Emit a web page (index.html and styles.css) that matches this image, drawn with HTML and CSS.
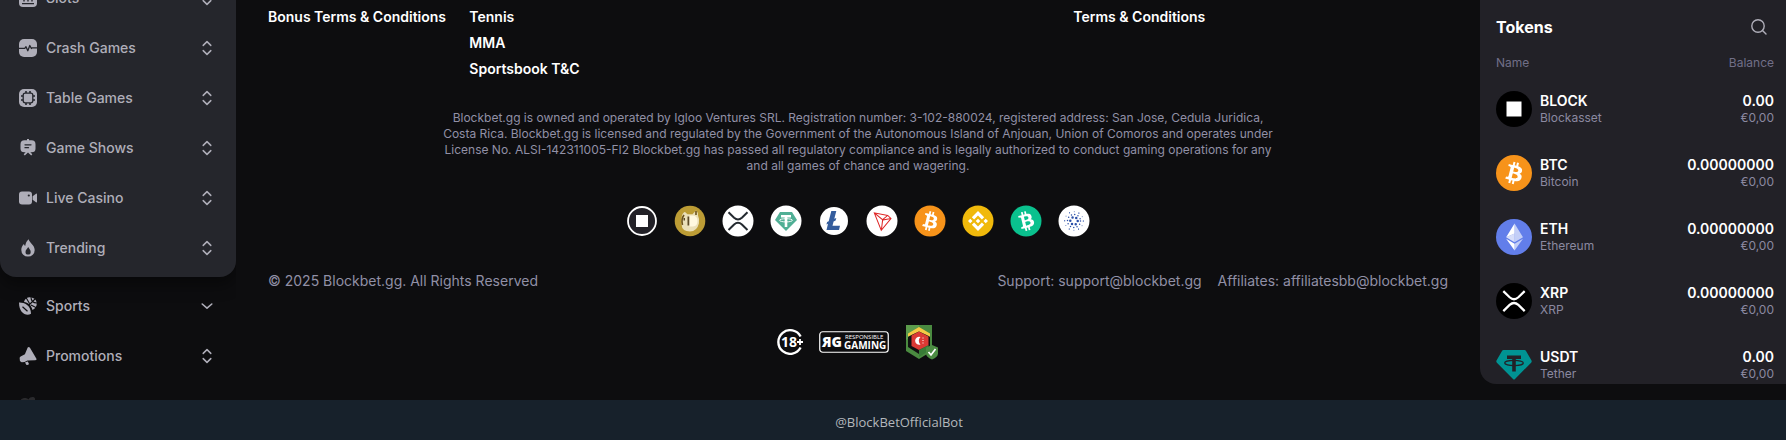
FILE: index.html
```html
<!DOCTYPE html>
<html lang="en">
<head>
<meta charset="utf-8">
<title>Blockbet.gg</title>
<link rel="stylesheet" href="styles.css">
</head>
<body>
<svg class="sprite" aria-hidden="true">
  <symbol id="updown" viewBox="0 0 14 18"><path d="M3.2 6.4 7 2.6l3.8 3.8M3.2 11.6 7 15.4l3.8-3.8" fill="none" stroke="currentColor" stroke-width="1.5" stroke-linecap="round" stroke-linejoin="round"/></symbol>
  <symbol id="btc" viewBox="0 0 32 32"><path fill="#fff" d="M23.189 14.02c.314-2.096-1.283-3.223-3.465-3.975l.708-2.84-1.728-.43-.69 2.765c-.454-.114-.92-.22-1.385-.326l.695-2.783L15.596 6l-.708 2.839c-.376-.086-.746-.17-1.104-.26l.002-.009-2.384-.595-.46 1.846s1.283.294 1.256.312c.7.175.826.638.805 1.006l-.806 3.235c.048.012.11.03.18.057l-.183-.045-1.13 4.532c-.086.212-.303.531-.793.41.018.025-1.256-.313-1.256-.313l-.858 1.978 2.25.561c.418.105.828.215 1.231.318l-.715 2.872 1.727.43.708-2.84c.472.127.93.245 1.378.357l-.706 2.828 1.728.43.715-2.866c2.948.558 5.164.333 6.097-2.333.752-2.146-.037-3.385-1.588-4.192 1.13-.26 1.98-1.003 2.207-2.538zm-3.95 5.538c-.533 2.147-4.148.986-5.32.695l.95-3.805c1.172.293 4.929.872 4.37 3.11zm.535-5.569c-.487 1.953-3.495.96-4.47.717l.86-3.45c.975.243 4.118.696 3.61 2.733z"/></symbol>
  <symbol id="xrp" viewBox="0 0 32 32"><path d="M6.5 7.2l5.6 5.5q3.9 3.5 7.8 0l5.6-5.5M6.5 25l5.600-5.500q3.900-3.500 7.800 0l5.600 5.500" fill="none" stroke="currentColor" stroke-width="2"/></symbol>
</svg>

<div class="app">
  <nav class="sidebar" aria-label="Main menu">
    <div class="menu menu-card">
      <button class="item" type="button"><svg class="ico" viewBox="0 0 18 18"><path fill="currentColor" d="M4 0h10a4 4 0 0 1 4 4v10a4 4 0 0 1-4 4H4a4 4 0 0 1-4-4V4a4 4 0 0 1 4-4z"/><path d="M3 14.6h12M5 8v4.400M9 8v4.400M13 8v4.400" stroke="#25262c" stroke-width="1.400"/></svg><span>Slots</span><svg class="arrow"><use href="#updown"/></svg></button>
      <button class="item" type="button"><svg class="ico" viewBox="0 0 18 18"><rect width="18" height="18" rx="5" fill="currentColor"/><path d="M0 9.300h5.800l1.200-1.600 1.800 4 2-5.200 1.600 3 .8-.7h4.800" fill="none" stroke="#25262c" stroke-width="1.300" stroke-linejoin="round"/></svg><span>Crash Games</span><svg class="arrow"><use href="#updown"/></svg></button>
      <button class="item" type="button"><svg class="ico" viewBox="0 0 18 18"><rect width="18" height="18" rx="5" fill="currentColor"/><rect x="4.200" y="4.200" width="9.600" height="9.600" rx="2" fill="none" stroke="#25262c" stroke-width="1.300"/><path d="M7 2v2M11 2v2M7 14v2M11 14v2M2 7h2M2 11h2M14 7h2M14 11h2" stroke="#25262c" stroke-width="1.600"/></svg><span>Table Games</span><svg class="arrow"><use href="#updown"/></svg></button>
      <button class="item" type="button"><svg class="ico" viewBox="0 0 18 18"><path d="M8 1.200V0h2v1.200h2.500q4 0 4 4v4.600q0 3.500-4 3.500h-1.200l2 2-1.100 1.100L9 13.400l-3.200 3-1.100-1.100 2-2H5.500q-4 0-4-3.500V5.200q0-4 4-4z" fill="currentColor"/><path d="M6 5.800h6M6 8.700h3.500" stroke="#25262c" stroke-width="1.300" stroke-linecap="round"/></svg><span>Game Shows</span><svg class="arrow"><use href="#updown"/></svg></button>
      <button class="item" type="button"><svg class="ico" viewBox="0 0 18 18"><rect y="2.500" width="13" height="13" rx="3" fill="currentColor"/><path d="M13.600 7.300 17 4.700q1-.5 1 .6v7.400q0 1.100-1 .6l-3.400-2.600z" fill="currentColor"/><circle cx="9.800" cy="6.500" r="1.100" fill="#25262c"/></svg><span>Live Casino</span><svg class="arrow"><use href="#updown"/></svg></button>
      <button class="item" type="button"><svg class="ico" viewBox="0 0 18 18"><path fill="currentColor" fill-rule="evenodd" d="M9.800.2c.2 3.200 5.900 5.600 5.900 10.700A6.600 6.600 0 0 1 9 17.600a6.600 6.600 0 0 1-6.700-6.700c0-2.400 1-4.400 2.600-6 .3 1 .7 1.600 1.300 2C6.600 4 7.800 1.600 9.800.2zM9.200 8c-.5 1.600-2.700 2.500-2.700 4.900a2.600 2.600 0 0 0 5.200 0c0-2-1.500-2.900-2.500-4.900z"/></svg><span>Trending</span><svg class="arrow"><use href="#updown"/></svg></button>
    </div>
    <div class="menu">
      <button class="item" type="button"><svg class="ico" viewBox="0 0 18 18"><path fill="currentColor" d="M0 5.500C5 5.300 12 8 12 16.800 7 19.500 0 16 0 5.500z"/><path d="M3.500 9.800l5 4.500" stroke="#0d0d0f" stroke-width="1.200"/><path fill="currentColor" d="M5 5C6-.5 12-1 15.500 1.800c3.500 3.200 3 8.700-2 11.200C12.500 8.500 9 5.500 5 5z"/><path d="M7 .5l3.500 6M18 11l-6-3M17 1l-7 7M12 0q0 6 6 6" fill="none" stroke="#0d0d0f" stroke-width="1.100"/></svg><span>Sports</span><svg class="arrow" viewBox="0 0 14 18"><path d="M2.200 7 7 11.200 11.800 7" fill="none" stroke="currentColor" stroke-width="1.600" stroke-linecap="round" stroke-linejoin="round"/></svg></button>
      <button class="item" type="button"><svg class="ico" viewBox="0 0 18 18"><path fill="currentColor" d="M8.700.5q1.200-1.200 2.400.6l6.200 10.300q.9 1.800-1.300 1.900l-7.600.2-2.800 1.600-2.800.2q-1.200-.1-1.900-1.500L.7 11.500q-.3-1.200.9-1.900l4.300-2.300z"/><path fill="currentColor" d="M6 15.600l2.800-1.200 1.200 2.500q-1 1.500-2.700.9z"/></svg><span>Promotions</span><svg class="arrow"><use href="#updown"/></svg></button>
      <div class="item item-faded" aria-hidden="true"><svg class="ico" viewBox="0 0 18 18"><path fill="currentColor" d="M2 2.500C4 .5 8 .5 9.500 2.500 11-.5 15-.5 16 1.500v14H2z"/></svg></div>
    </div>
  </nav>

  <main class="content">
    <div class="links">
      <ul class="col"><li><a href="#">Bonus Terms &amp; Conditions</a></li></ul>
      <ul class="col"><li><a href="#">Tennis</a></li><li><a href="#">MMA</a></li><li><a href="#">Sportsbook T&amp;C</a></li></ul>
      <ul class="col col-terms"><li><a href="#">Terms &amp; Conditions</a></li></ul>
    </div>
    <p class="legal">Blockbet.gg is owned and operated by Igloo Ventures SRL. Registration number: 3-102-880024, registered address: San Jose, Cedula Juridica,<br>Costa Rica. Blockbet.gg is licensed and regulated by the Government of the Autonomous Island of Anjouan, Union of Comoros and operates under<br>License No. ALSI-142311005-FI2 Blockbet.gg has passed all regulatory compliance and is legally authorized to conduct gaming operations for any<br>and all games of chance and wagering.</p>
    <div class="coins">
      <svg viewBox="0 0 32 32"><circle cx="16" cy="16" r="14" fill="#222127" stroke="#fff" stroke-width="1.800"/><path d="M10 10h12v12H10z" fill="#fff"/></svg>
      <svg viewBox="0 0 32 32"><circle cx="16" cy="16" r="15.300" fill="#bc9c35"/><path d="M7.500 15c0-4 1-7.500 3.500-8l2.500 2.300h5L22 5.500q2 1.500 2 5 1.800 3.500.9 8-1.900 7.800-8.900 8-8 0-8.500-7z" fill="#eadfb9"/><path d="M10 10q-3 4-1.500 10M22 6v4" fill="none" stroke="#6b521c" stroke-width="1.600"/><path d="M13.500 11.500h2v9h-2zM9.500 13H11v2.500H9.500z" fill="#5c4a28"/><path d="M15.500 10.500H19q4.500.5 4.500 5.500T19 21.500h-3.500z" fill="#fff8e0"/></svg>
      <svg class="xrp-light" viewBox="0 0 32 32"><circle cx="16" cy="16" r="15.500" fill="#fff"/><use href="#xrp"/></svg>
      <svg viewBox="0 0 32 32"><circle cx="16" cy="16" r="15.500" fill="#fff"/><path d="M10 7h12l5 8-11 11L5 15z" fill="#50af95"/><path d="M11 10h10v2.600h-3.700V22h-2.600v-9.400H11z" fill="#fff"/><ellipse cx="16" cy="15.300" rx="6.500" ry="1.600" fill="none" stroke="#fff" stroke-width=".9"/></svg>
      <svg viewBox="0 0 32 32"><circle cx="16" cy="16" r="14" fill="#fff"/><path fill="#345d9d" d="M10 18.800l-1.600.6.700-2.500 1.600-.6L13.300 6h5l-2 7.800 2-.8-.7 2.600-2 .8-1.100 4.400H22L21 25H8.500z"/></svg>
      <svg viewBox="0 0 32 32"><circle cx="16" cy="16" r="15.500" fill="#fff"/><path fill="#df2424" d="M21.932 9.913L7.500 7.257l7.595 19.112 10.583-12.894-3.746-3.562zm-.232 1.170l2.208 2.099-6.038 1.093 3.830-3.192zm-5.142 2.973l-6.364-5.278 10.402 1.914-4.038 3.364zm-.453.934l-1.038 8.580L9.472 9.487l6.633 5.502zm.96.455l6.687-1.210-7.670 9.343.983-8.133z"/></svg>
      <svg viewBox="0 0 32 32"><circle cx="16" cy="16" r="15.500" fill="#f7931a"/><use href="#btc"/></svg>
      <svg viewBox="0 0 32 32"><circle cx="16" cy="16" r="15.500" fill="#f0b90b"/><path fill="#fff" d="M12.116 14.404L16 10.520l3.886 3.886 2.260-2.260L16 6l-6.144 6.144 2.260 2.260zM6 16l2.260-2.260L10.520 16l-2.260 2.260L6 16zm6.116 1.596L16 21.480l3.886-3.886 2.260 2.259L16 26l-6.144-6.144-.003-.003 2.263-2.257zM21.480 16l2.260-2.260L26 16l-2.260 2.260L21.480 16zM16 13.706L18.294 16 16 18.294 13.706 16z"/></svg>
      <svg viewBox="0 0 32 32"><circle cx="16" cy="16" r="15.500" fill="#0ac18e"/><use href="#btc" transform="rotate(-28 16 16)"/></svg>
      <svg viewBox="0 0 32 32"><circle cx="16" cy="16" r="15.500" fill="#fff"/><g fill="none" stroke="#2a4fa8" stroke-linecap="round"><circle cx="16" cy="16" r="3.700" stroke-width="2.500" stroke-dasharray="0 3.875"/><circle cx="16" cy="16" r="6.500" stroke-width="1.500" stroke-dasharray="0 3.403"/><circle cx="16" cy="16" r="9.300" stroke-width="1.100" stroke-dasharray="0 9.739"/><circle cx="16" cy="16" r="9.300" stroke-width=".8" stroke-dasharray="0 4.869"/></g></svg>
    </div>
    <div class="meta">
      <span>© 2025 Blockbet.gg. All Rights Reserved</span>
      <span class="contacts"><a href="mailto:support@blockbet.gg">Support: support@blockbet.gg</a><a href="mailto:affiliatesbb@blockbet.gg">Affiliates: affiliatesbb@blockbet.gg</a></span>
    </div>
    <div class="badges">
      <svg width="26" height="26" viewBox="0 0 26 26" role="img"><path d="M23.600 7.500a11.800 11.800 0 1 0 0 11" fill="none" stroke="#fff" stroke-width="2.400"/><text class="age" x="4" y="18">18</text><path d="M20 13h6M23 10v6" stroke="#fff" stroke-width="1.800"/></svg>
      <svg width="70" height="22" viewBox="0 0 70 22" role="img"><rect x=".75" y=".75" width="68.500" height="20.500" rx="3" fill="none" stroke="#fff" stroke-width="1.200"/><text class="rg" x="3" y="16">ЯG</text><text class="rg-top" x="26" y="8">RESPONSIBLE</text><text class="rg-bottom" x="25" y="18">GAMING</text></svg>
      <svg width="34" height="36" viewBox="0 0 34 36" role="img"><path d="M1 1h26v26l-13 8-13-8z" fill="#4a8a40"/><path d="M1 1h13v7L1 16z" fill="#5c9c4c"/><path d="M3 13l11-7 11 7v10l-11 7-11-7z" fill="#111"/><path d="M3 9.500 14 3l11 6.500v3L14 7.500 3 12.500z" fill="#f5c945"/><path d="M6.500 11.500 14 7.500l9.500 5v9L14 26l-7.500-4z" fill="#db3a35"/><path d="M14 26l9.500-5v6L14 33z" fill="#387c37"/><path d="M15.500 13a4 4 0 1 0 0 7.500 5 5 0 0 1 0-7.500z" fill="#fff"/><path d="M18 13.500v1M18 16v1M18 18.500v1" stroke="#fff"/><path d="M21 23.500l6-2.500 6 2.500v6q0 3.500-6 6-6-2.500-6-6z" fill="#4c8c43"/><path d="M23.500 28l2.500 3 4.500-6" fill="none" stroke="#fff" stroke-width="1.700"/></svg>
    </div>
  </main>

  <aside class="tokens">
    <header class="tokens-head"><h2>Tokens</h2><button class="search" type="button" aria-label="Search"><svg viewBox="0 0 18 18"><circle cx="8" cy="8" r="6.200"/><path d="M12.500 12.500 16 16"/></svg></button></header>
    <table class="table">
      <thead><tr><th scope="col">Name</th><th scope="col" class="num">Balance</th></tr></thead>
      <tbody>
        <tr><td><div class="token"><svg viewBox="0 0 36 36"><circle cx="18" cy="18" r="18"/><path d="M10.500 10.500h15v15h-15z" fill="#fff"/></svg><div><strong>BLOCK</strong><small>Blockasset</small></div></div></td><td class="num"><strong>0.00</strong><small>€0,00</small></td></tr>
        <tr><td><div class="token"><svg viewBox="0 0 32 32"><circle cx="16" cy="16" r="16" fill="#f7931a"/><use href="#btc"/></svg><div><strong>BTC</strong><small>Bitcoin</small></div></div></td><td class="num"><strong>0.00000000</strong><small>€0,00</small></td></tr>
        <tr><td><div class="token"><svg viewBox="0 0 32 32"><circle cx="16" cy="16" r="16" fill="#627eea"/><path d="M16.500 4v8.870l7.497 3.350zM16.500 21.968v6.027L24 17.616zM16.500 20.573l7.497-4.353-7.497-3.348z" fill="#fff" fill-opacity=".62"/><path d="M16.500 4L9 16.220l7.500-3.350zM16.500 27.995v-6.028L9 17.616z" fill="#fff"/><path d="M9 16.220l7.500 4.353v-7.701z" fill="#fff" fill-opacity=".75"/></svg><div><strong>ETH</strong><small>Ethereum</small></div></div></td><td class="num"><strong>0.00000000</strong><small>€0,00</small></td></tr>
        <tr><td><div class="token"><svg class="xrp-dark" viewBox="0 0 32 32"><circle cx="16" cy="16" r="16" fill="#000"/><use href="#xrp"/></svg><div><strong>XRP</strong><small>XRP</small></div></div></td><td class="num"><strong>0.00000000</strong><small>€0,00</small></td></tr>
        <tr><td><div class="token"><svg viewBox="0 0 36 36"><path d="M7.500 3h21q1 0 1.500 1l5.500 9.500q.6 1.200-.4 2.200L19 32q-1 1-2 0L.9 15.700q-1-1-.4-2.200L6 4q.5-1 1.500-1z" fill="#009393"/><path d="M11 8.500h14V12h-5.200v12.500h-3.600V12H11z" fill="#222127"/><ellipse cx="18" cy="16" rx="9.300" ry="2.600" fill="none" stroke="#222127" stroke-width="1.300"/></svg><div><strong>USDT</strong><small>Tether</small></div></div></td><td class="num"><strong>0.00</strong><small>€0,00</small></td></tr>
      </tbody>
    </table>
  </aside>
</div>
<footer class="botbar"><a href="#">@BlockBetOfficialBot</a></footer>
</body>
</html>
```
FILE: styles.css
```css
* { box-sizing: border-box; }

body {
  margin: 0;
  height: 100vh;
  display: flex;
  flex-direction: column;
  overflow: hidden;
  background: #0d0d0f;
  color: #fff;
  font: 14px/18px Inter, sans-serif;
}

a { color: inherit; text-decoration: none; }
button { border: 0; padding: 0; background: none; color: inherit; font: inherit; cursor: pointer; }
.sprite { display: none; }

.app {
  flex: 1;
  min-height: 0;
  display: grid;
  grid-template-columns: 236px minmax(0, 1fr) 306px;
  grid-template-rows: minmax(0, 1fr);
}

/* Sidebar, scrolled part of the way down */
.sidebar { overflow: hidden; color: #afaeb9; }
.menu { display: flex; flex-direction: column; padding: 4px 0; }
.menu-card {
  margin-top: -31px;
  background: #25262c;
  border-radius: 0 0 16px 16px;
  box-shadow: 0 8px 16px #0006;
}
.item {
  height: 50px;
  flex: none;
  display: flex;
  align-items: center;
  gap: 9px;
  padding: 0 22px 0 19px;
  font-weight: 500;
  text-align: left;
}
.item span { flex: 1; }
.ico { width: 18px; height: 18px; }
.arrow { width: 14px; height: 18px; }
.item-faded { color: #2a2a2d; }

/* Page footer content */
.content { padding: 8px 32px 0; }
.links { display: grid; grid-template-columns: repeat(6, minmax(0, 1fr)); column-gap: 28px; }
.col {
  margin: 0;
  padding: 0;
  list-style: none;
  display: flex;
  flex-direction: column;
  gap: 8px;
  font-weight: 600;
  white-space: nowrap;
}
.col-terms { grid-column: 5; }
.legal {
  max-width: 880px;
  margin: 32px auto 0;
  font-size: 12px;
  line-height: 16px;
  text-align: center;
  color: #9190a6;
}
.coins { display: flex; justify-content: center; gap: 16px; margin-top: 31px; }
.coins svg { width: 32px; height: 32px; }
.xrp-light { color: #23292f; }
.xrp-dark { color: #fff; }
.meta { display: flex; justify-content: space-between; margin-top: 35px; color: #9190a6; }
.contacts { display: flex; gap: 16px; }
.badges { display: flex; justify-content: center; align-items: center; gap: 16px; margin-top: 34px; }
.badges text { fill: #fff; font-family: "Open Sans", sans-serif; }
.badges .age { font-size: 14px; font-weight: 700; }
.badges .rg { font-size: 14px; font-weight: 800; }
.badges .rg-top { font-size: 6px; }
.badges .rg-bottom { font-size: 10px; font-weight: 700; }

/* Token balances */
.tokens {
  margin-bottom: 16px;
  padding: 5px 12px 0 16px;
  overflow: hidden;
  background: #222127;
  border-bottom-left-radius: 16px;
}
.tokens-head { display: flex; justify-content: space-between; align-items: center; height: 44px; padding-right: 6px; }
.tokens h2 { margin: 0; font-size: 16px; font-weight: 700; }
.search { width: 18px; height: 18px; }
.search svg { display: block; fill: none; stroke: #afaeb9; stroke-width: 1.4; stroke-linecap: round; }
.table { width: 100%; border-collapse: collapse; }
.table th { height: 28px; padding: 0; font-size: 12px; font-weight: 400; line-height: 16px; text-align: left; color: #716f87; }
.table td { height: 64px; padding: 0; }
.table .num { text-align: right; }
.token { display: flex; align-items: center; gap: 8px; }
.token svg { width: 36px; height: 36px; }
.table strong, .table small { display: block; line-height: 17px; }
.table strong { font-weight: 600; }
.table small { font-size: 12px; color: #8b89a0; }

.botbar {
  height: 40px;
  display: flex;
  align-items: center;
  justify-content: center;
  padding: 3px 0 0 12px;
  background: #17212b;
  color: #b4b8bc;
  font: 13px/18px "Open Sans", sans-serif;
}
```
